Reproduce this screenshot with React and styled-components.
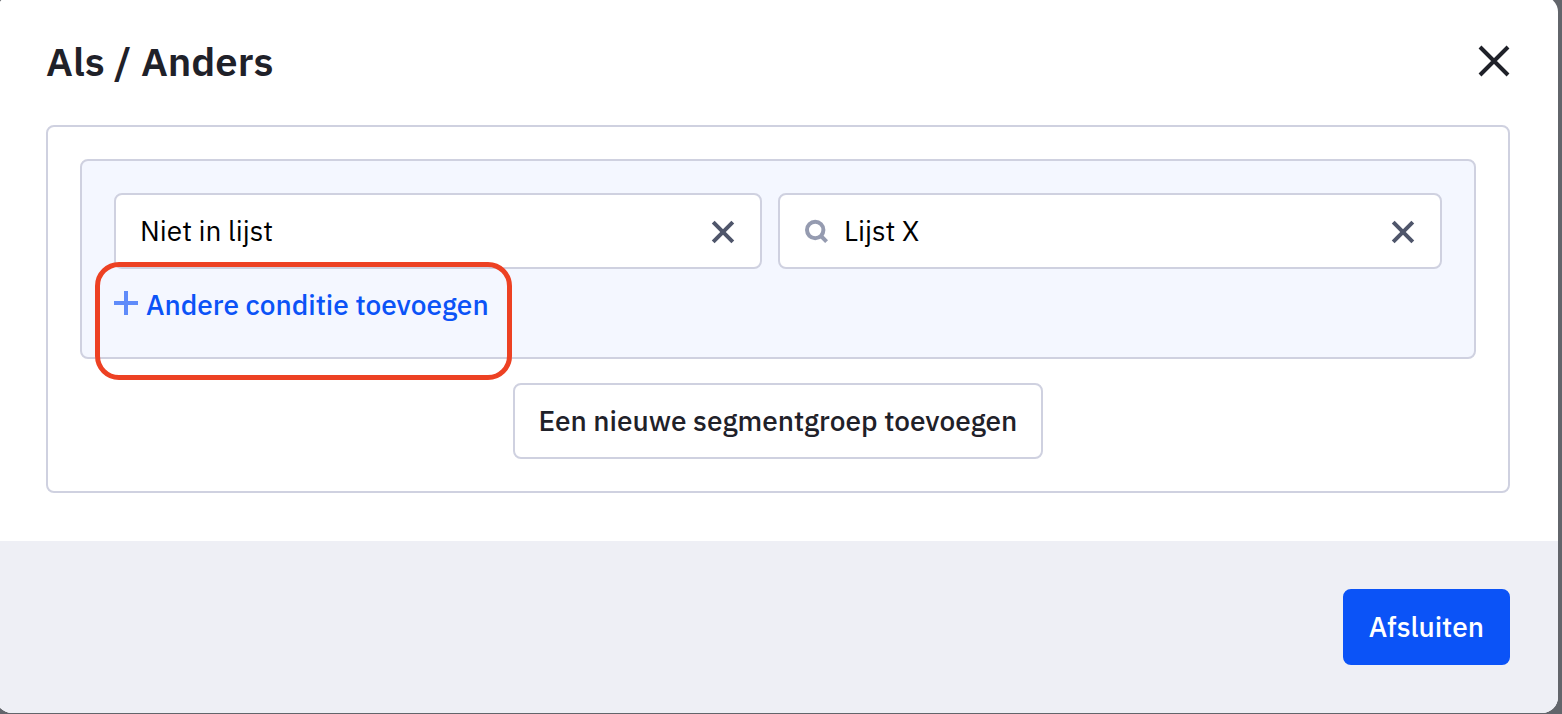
import React from "react";
import styled, { createGlobalStyle } from "styled-components";

const GlobalStyle = createGlobalStyle`
  *, *::before, *::after { box-sizing: border-box; }
  body {
    margin: 0;
    background: #62656b;
    font-family: "IBM Plex Sans", Roboto, "Liberation Sans", sans-serif;
    font-size: 28px;
    line-height: 36px;
    color: #1f2129;
  }
  button, input { font: inherit; }
`;

const Backdrop = styled.div`
  display: flow-root;
  overflow: hidden;
  min-height: 100vh;
  background: #62656b;
`;

const Dialog = styled.section`
  margin: -4px 4px 1px -4px;
  overflow: hidden;
  border-radius: 16px;
  background: #fff;
`;

const Header = styled.header`
  display: flex;
  align-items: center;
  justify-content: space-between;
  padding: 39px 48px 38px 50px;
`;

const Title = styled.h2`
  margin: 0;
  font-size: 40px;
  line-height: 52px;
  font-weight: 600;
`;

const IconButton = styled.button`
  display: flex;
  flex: none;
  padding: 0;
  border: 0;
  background: none;
  color: ${(p) => p.$color};
  cursor: pointer;
`;

const Body = styled.div`
  padding: 0 48px 48px 50px;
`;

const Panel = styled.div`
  display: flex;
  flex-direction: column;
  align-items: center;
  gap: 24px;
  padding: 32px;
  border: 2px solid #cfd1e0;
  border-radius: 8px;
`;

const Group = styled.div`
  width: 100%;
  padding: 32px;
  border: 2px solid #cfd1e0;
  border-radius: 8px;
  background: #f4f7ff;
`;

const Condition = styled.div`
  display: grid;
  grid-template-columns: 81fr 83fr;
  gap: 16px;
`;

const Field = styled.div`
  display: flex;
  align-items: center;
  gap: 16px;
  height: 76px;
  padding: 0 24px;
  border: 2px solid #cfd1e0;
  border-radius: 8px;
  background: #fff;
`;

const FieldInput = styled.input`
  flex: 1;
  min-width: 0;
  padding: 0;
  border: 0;
  outline: 0;
  background: none;
  color: #000;
`;

const AddRow = styled.div`
  position: relative;
  height: 56px;
  padding-top: 18px;
`;

const AddButton = styled.button`
  display: flex;
  align-items: center;
  gap: 8px;
  padding: 0;
  border: 0;
  background: none;
  color: #0b53f7;
  font-weight: 500;
  white-space: nowrap;
  cursor: pointer;
`;

const Highlight = styled.div`
  position: absolute;
  top: -7px;
  left: -19px;
  width: 417px;
  height: 118px;
  border: 5px solid #ed4123;
  border-radius: 24px;
  pointer-events: none;
`;

const Button = styled.button`
  height: 76px;
  padding: 0 24px;
  border: 2px solid ${(p) => (p.$primary ? "#0b53f7" : "#cfd1e0")};
  border-radius: 8px;
  background: ${(p) => (p.$primary ? "#0b53f7" : "#fff")};
  color: ${(p) => (p.$primary ? "#fff" : "#1f2129")};
  font-weight: 500;
  cursor: pointer;
`;

const Footer = styled.footer`
  display: flex;
  justify-content: flex-end;
  padding: 48px;
  background: #eeeff5;
`;

function CloseIcon() {
  return (
    <svg width="32" height="32" viewBox="0 0 32 32" fill="none" stroke="currentColor" strokeWidth="4" aria-hidden="true">
      <path d="M2 2L30 30M30 2L2 30" />
    </svg>
  );
}

function ClearIcon() {
  return (
    <svg width="26" height="26" viewBox="0 0 26 26" fill="none" stroke="currentColor" strokeWidth="4" aria-hidden="true">
      <path d="M3.2 4.2L22.8 23.8M22.8 4.2L3.2 23.8" />
    </svg>
  );
}

function SearchIcon() {
  return (
    <svg width="24" height="24" viewBox="0 0 24 24" fill="none" stroke="#959bb0" strokeWidth="4" aria-hidden="true">
      <circle cx="11.2" cy="11" r="8.2" />
      <path d="M17 17L22.6 22.6" />
    </svg>
  );
}

function PlusIcon() {
  return (
    <svg width="24" height="28" viewBox="0 0 24 28" fill="none" stroke="#5f8bfa" strokeWidth="4" aria-hidden="true">
      <path d="M0 12H24M12 0V24" />
    </svg>
  );
}

export default function App() {
  return (
    <>
      <GlobalStyle />
      <Backdrop>
        <Dialog role="dialog" aria-labelledby="dialog-title">
          <Header>
            <Title id="dialog-title">Als / Anders</Title>
            <IconButton type="button" aria-label="Sluiten" $color="#1f2129">
              <CloseIcon />
            </IconButton>
          </Header>
          <Body>
            <Panel>
              <Group>
                <Condition>
                  <Field>
                    <FieldInput aria-label="Conditie" defaultValue="Niet in lijst" />
                    <IconButton type="button" aria-label="Conditie wissen" $color="#4f566b">
                      <ClearIcon />
                    </IconButton>
                  </Field>
                  <Field>
                    <SearchIcon />
                    <FieldInput aria-label="Lijst" defaultValue="Lijst X" />
                    <IconButton type="button" aria-label="Lijst wissen" $color="#4f566b">
                      <ClearIcon />
                    </IconButton>
                  </Field>
                </Condition>
                <AddRow>
                  <AddButton type="button">
                    <PlusIcon />
                    Andere conditie toevoegen
                  </AddButton>
                  <Highlight />
                </AddRow>
              </Group>
              <Button type="button">Een nieuwe segmentgroep toevoegen</Button>
            </Panel>
          </Body>
          <Footer>
            <Button type="button" $primary>Afsluiten</Button>
          </Footer>
        </Dialog>
      </Backdrop>
    </>
  );
}
